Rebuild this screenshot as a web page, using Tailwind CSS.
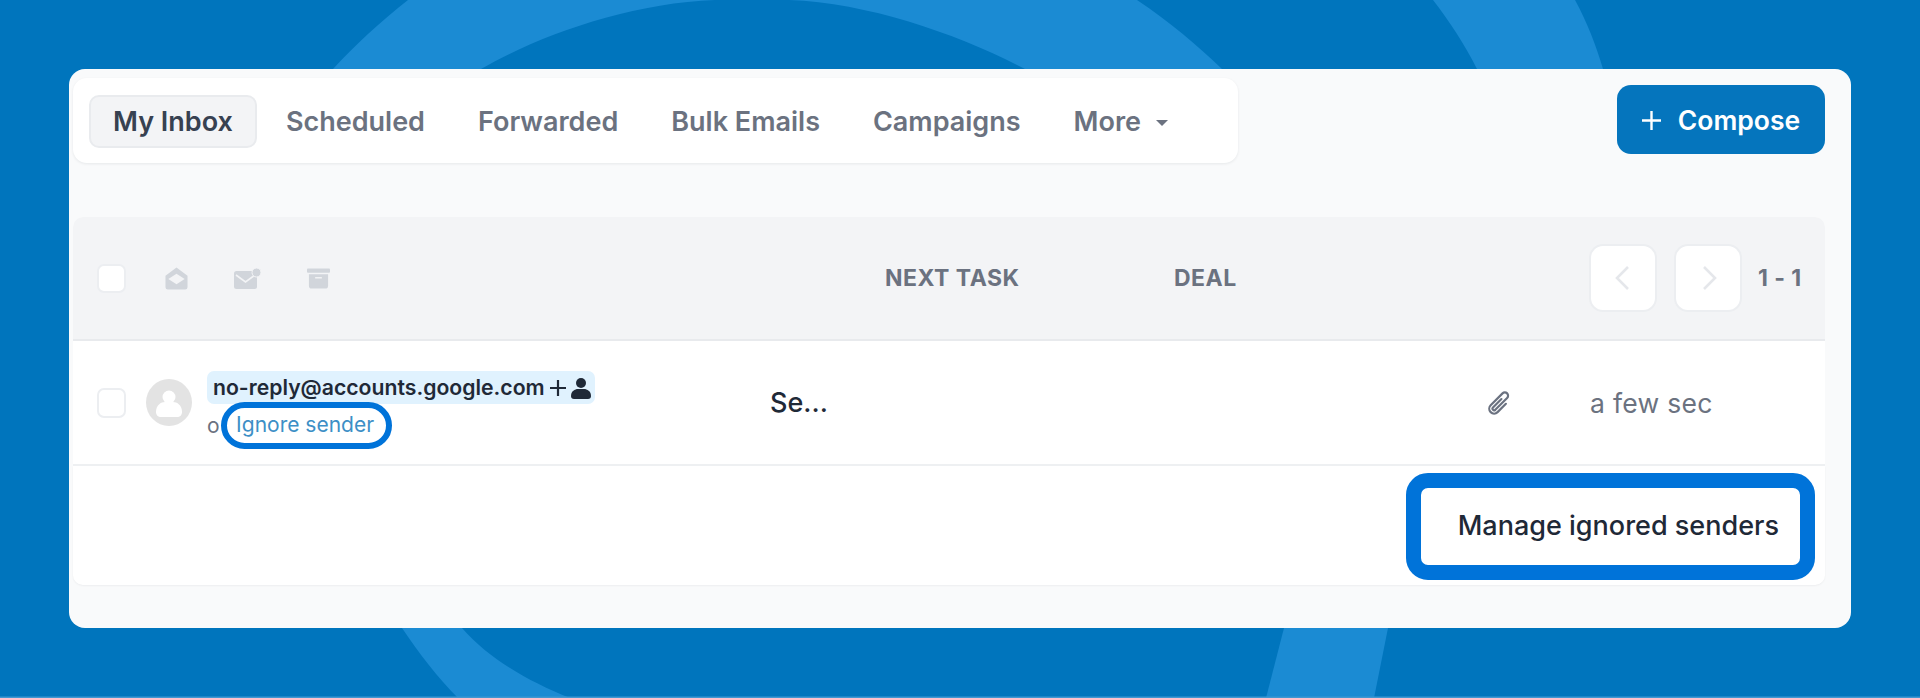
<!DOCTYPE html>
<html lang="en">
<head>
  <meta charset="UTF-8">
  <meta name="viewport" content="width=device-width, initial-scale=1.0">
  <title>Manage ignored senders</title>
  <script src="https://cdn.jsdelivr.net/npm/@tailwindcss/browser@4"></script>
</head>
<body class="bg-[#0075bd] font-['Inter',sans-serif]">
  <div class="relative h-[698px] w-[1920px] overflow-hidden pt-[69px] pl-[69px]">
    <!-- Background swirl -->
    <svg class="absolute top-0 left-0" width="1920" height="698" viewBox="0 0 1920 698" fill="#1b8bd3">
      <path d="M408 0 L1137 0 C1170 22 1197 45 1222 69 L1025 69 C960 35 870 3 789 0 L715 0 C630 3 540 35 481 69 L333 69 C355 45 380 22 408 0Z" />
      <path d="M1433 0 L1575 0 C1587 22 1596 45 1603 69 L1477 69 C1465 45 1450 22 1433 0Z" />
      <path d="M402 628 L462 628 C490 660 530 682 570 698 L458 698 C438 678 418 652 402 628Z" />
      <path d="M1284 628 L1388 628 L1374 698 L1266 698Z" />
      <rect x="0" y="696.5" width="1920" height="1.5" fill="#3f97d2" />
    </svg>

    <div class="relative flex h-[559px] w-[1782px] flex-col rounded-[16px] bg-[#f9fafb] pt-[9px] pr-[26px] pl-[4px]">
      <!-- Tabs and compose -->
      <div class="flex items-start justify-between">
        <div class="flex h-[85px] w-[1165px] items-center gap-[5px] rounded-[14px] bg-white pt-[2px] pl-4 text-[27px] font-semibold text-[#6b7280] shadow-[0_1px_3px_rgba(17,24,39,0.08)]">
          <div class="flex h-[53px] items-center rounded-[10px] border-2 border-[#e9ebee] bg-[#f3f4f6] px-[22px] pt-[2px] text-[#374151]">My Inbox</div>
          <div class="flex h-[53px] items-center px-6 pt-[2px]">Scheduled</div>
          <div class="flex h-[53px] items-center px-6 pt-[2px]">Forwarded</div>
          <div class="flex h-[53px] items-center px-6 pt-[2px]">Bulk Emails</div>
          <div class="flex h-[53px] items-center px-6 pt-[2px]">Campaigns</div>
          <div class="flex h-[53px] items-center gap-[15px] px-6 pt-[2px]">
            More
            <svg width="12" height="6" viewBox="0 0 12 6" fill="#6b7280"><path d="M0 0 H12 L6 6Z" /></svg>
          </div>
        </div>
        <button class="mt-[7px] flex h-[69px] w-[208px] items-center justify-center gap-[17px] rounded-[14px] bg-[#0575bd] pt-[2px] text-[26.5px] font-semibold text-white">
          <svg width="19" height="19" viewBox="0 0 19 19" fill="none" stroke="white" stroke-width="2.4"><path d="M9.5 0 V19 M0 9.5 H19" /></svg>
          Compose
        </button>
      </div>

      <!-- Table -->
      <div class="mt-[54px] rounded-[10px] bg-white">
        <!-- Toolbar -->
        <div class="flex h-[124px] items-center rounded-t-[10px] border-b-2 border-[#e8eaed] bg-[#f3f4f6] pl-6">
          <div class="h-[29px] w-[29px] rounded-[7px] border-2 border-[#eceef1] bg-white"></div>
          <svg class="ml-[39px]" width="23" height="23" viewBox="0 0 24 24" fill="#d1d5db">
            <path d="M12 .5 L23.5 9 V21 a2.5 2.5 0 0 1-2.5 2.5 H3 A2.5 2.5 0 0 1 .5 21 V9Z" />
            <path d="M12 7 L20.5 12.5 L12 18 L3.5 12.5Z" fill="#f3f4f6" />
          </svg>
          <svg class="ml-[46px]" width="27" height="21" viewBox="0 0 27 21" fill="#d1d5db">
            <rect x="0" y="3" width="23" height="18" rx="2.5" />
            <path d="M2 7 L11.5 14 L21 7" fill="none" stroke="#f3f4f6" stroke-width="1.6" />
            <circle cx="22.5" cy="4.5" r="4.5" stroke="#f3f4f6" stroke-width="1" />
          </svg>
          <svg class="ml-[46px]" width="23" height="21" viewBox="0 0 24 21" fill="#d1d5db">
            <rect x="0" y="0" width="24" height="4.5" rx="1" />
            <path d="M2 6 H22 V18 a3 3 0 0 1-3 3 H5 a3 3 0 0 1-3-3Z" />
            <rect x="8.5" y="9" width="7" height="1.5" fill="#f3f4f6" />
          </svg>
          <div class="ml-[555px] w-[289px] text-[23px] font-bold tracking-[0.5px] text-[#6b7280]">NEXT TASK</div>
          <div class="w-[415px] text-[23px] font-bold tracking-[0.5px] text-[#6b7280]">DEAL</div>
          <button class="flex h-[68px] w-[68px] items-center justify-center rounded-[14px] border-2 border-[#eceef1] bg-white pr-[3px]">
            <svg width="14" height="24" viewBox="0 0 14 24" fill="none" stroke="#e5e7eb" stroke-width="2.6"><path d="M13 1 L2 12 L13 23" /></svg>
          </button>
          <button class="ml-[17px] flex h-[68px] w-[68px] items-center justify-center rounded-[14px] border-2 border-[#eceef1] bg-white pl-[3px]">
            <svg width="14" height="24" viewBox="0 0 14 24" fill="none" stroke="#e5e7eb" stroke-width="2.6"><path d="M1 1 L12 12 L1 23" /></svg>
          </button>
          <div class="ml-4 text-[23px] font-bold tracking-[0.4px] text-[#6b7280]">1 - 1</div>
        </div>

        <!-- Email row -->
        <div class="flex h-[125px] items-center border-b-2 border-[#eef0f2] pl-6">
          <div class="h-[30px] w-[29px] rounded-[7px] border-2 border-[#eceef1] bg-white"></div>
          <svg class="ml-5" width="46" height="47" viewBox="0 0 46 47">
            <ellipse cx="23" cy="23.5" rx="23" ry="23.5" fill="#e3e3e3" />
            <circle cx="23" cy="18" r="6.5" fill="#fff" />
            <path d="M10 33 C10 26 15 23 19 23 H27 C31 23 36 26 36 33 C36 36 34 38 31 38 H15 C12 38 10 36 10 33Z" fill="#fff" />
          </svg>
          <div class="ml-[15px] w-[563px] self-start pt-[30px]">
            <div class="flex h-[33px] w-[388px] items-center rounded-[7px] bg-[#e0f2fe] pl-[6px] text-[21.2px] font-semibold whitespace-nowrap text-[#1f2937]">
              no-reply@accounts.google.com
              <svg class="ml-[5px]" width="16" height="16" viewBox="0 0 16 16" fill="none" stroke="#1f2937" stroke-width="2.2"><path d="M8 0 V16 M0 8 H16" /></svg>
              <svg class="ml-[5px]" width="20" height="22" viewBox="0 0 20 22" fill="#1f2937">
                <circle cx="10" cy="6" r="5" />
                <path d="M0 19 C0 14 4 12 7 12 H13 C16 12 20 14 20 19 C20 21 19 22 17 22 H3 C1 22 0 21 0 19Z" />
              </svg>
            </div>
            <div class="-mt-[2px] flex items-center text-[21px] text-[#6b7280]">
              o
              <a class="ml-[1px] flex h-[47px] w-[171px] items-center justify-center rounded-full border-[6px] border-[#0073d9] bg-white pr-[2px] pb-[1px] whitespace-nowrap text-[#3d8fc6]">Ignore sender</a>
            </div>
          </div>
          <div class="w-[716px] pt-[2px] text-[27px] font-medium text-[#1f2937]">Se...</div>
          <svg width="26" height="26" viewBox="0 0 24 24" fill="none" stroke="#6b7280" stroke-width="2" stroke-linecap="round" stroke-linejoin="round">
            <path d="m18.375 12.739-7.693 7.693a4.5 4.5 0 0 1-6.364-6.364l10.94-10.94A3 3 0 1 1 19.5 7.372L8.552 18.32m.009-.01-.01.01m5.699-9.941-7.81 7.81a1.5 1.5 0 0 0 2.112 2.13" />
          </svg>
          <div class="ml-[78px] pt-[2px] text-[26.5px] tracking-[0.3px] text-[#6b7280]">a few sec</div>
        </div>

        <!-- Footer with highlighted link -->
        <div class="flex h-[119px] justify-end rounded-b-[10px] pt-[7px] pr-[10px] shadow-[0_1px_2px_rgba(17,24,39,0.05)]">
          <a class="flex h-[107px] w-[409px] items-center justify-end rounded-[22px] border-[15px] border-[#0073d9] bg-white pr-[21px] text-[27px] font-medium text-[#1f2937]">Manage ignored senders</a>
        </div>
      </div>
    </div>
  </div>
</body>
</html>
